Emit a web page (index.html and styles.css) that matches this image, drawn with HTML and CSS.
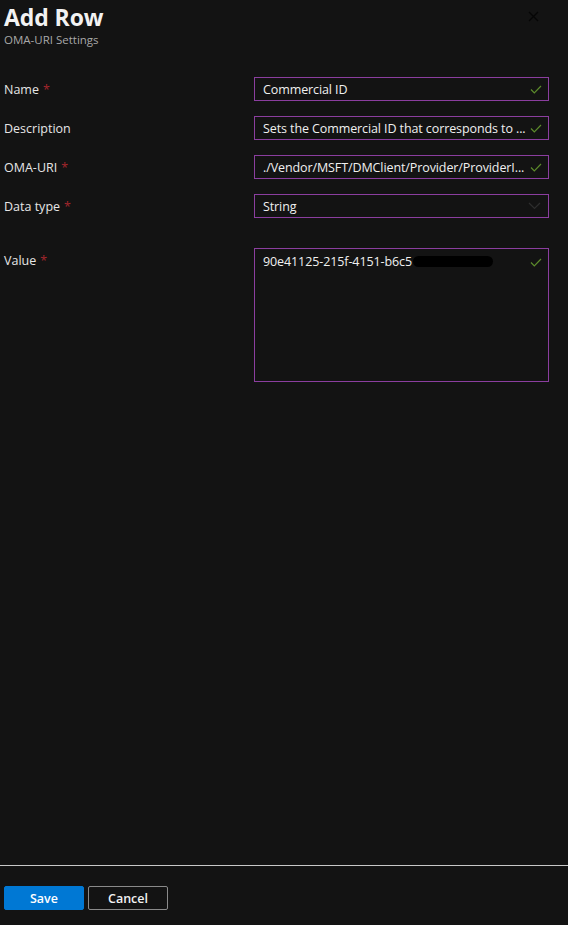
FILE: index.html
```html
<!DOCTYPE html>
<html>
<head>
<meta charset="utf-8">
<link rel="stylesheet" href="styles.css">
</head>
<body>
<div class="panel">
  <header class="head">
    <div class="titles">
      <h1 class="title">Add Row</h1>
      <div class="subtitle">OMA-URI Settings</div>
    </div>
    <button class="close" aria-label="Close">
      <svg width="11" height="11" viewBox="0 0 11 11"><path d="M1 1 L10 10 M10 1 L1 10" stroke="#050505" stroke-width="1.3" fill="none"/></svg>
    </button>
  </header>

  <main class="form">
    <div class="label">Name <span class="req">*</span></div>
    <div class="field"><span class="val">Commercial ID</span><svg class="chk" width="12" height="9" viewBox="0 0 12 9"><path d="M1 4.5 L4.3 7.8 L11 1" stroke="#5d8c2c" stroke-width="1.2" fill="none"/></svg></div>

    <div class="label">Description</div>
    <div class="field"><span class="val">Sets the Commercial ID that corresponds to ...</span><svg class="chk" width="12" height="9" viewBox="0 0 12 9"><path d="M1 4.5 L4.3 7.8 L11 1" stroke="#5d8c2c" stroke-width="1.2" fill="none"/></svg></div>

    <div class="label">OMA-URI <span class="req">*</span></div>
    <div class="field"><span class="val">./Vendor/MSFT/DMClient/Provider/ProviderI...</span><svg class="chk" width="12" height="9" viewBox="0 0 12 9"><path d="M1 4.5 L4.3 7.8 L11 1" stroke="#5d8c2c" stroke-width="1.2" fill="none"/></svg></div>

    <div class="label">Data type <span class="req">*</span></div>
    <div class="field"><span class="val">String</span><svg class="chev" width="13" height="8" viewBox="0 0 13 8"><path d="M1 1 L6.5 6.5 L12 1" stroke="#2e2e2e" stroke-width="1.2" fill="none"/></svg></div>

    <div class="label label-top">Value <span class="req">*</span></div>
    <div class="field area"><span class="val">90e41125-215f-4151-b6c5<span class="redact"></span></span><svg class="chk" width="12" height="9" viewBox="0 0 12 9"><path d="M1 4.5 L4.3 7.8 L11 1" stroke="#5d8c2c" stroke-width="1.2" fill="none"/></svg></div>
  </main>

  <footer class="foot">
    <button class="btn primary">Save</button>
    <button class="btn">Cancel</button>
  </footer>
</div>
</body>
</html>
```
FILE: styles.css
```css
* { box-sizing: border-box; }
html, body { margin: 0; padding: 0; background: #131313; }
body {
  font-family: "Open Sans", "Noto Sans", sans-serif;
  color: #e6e6e6;
  width: 568px;
  height: 925px;
  overflow: hidden;
}
.panel {
  height: 925px;
  display: flex;
  flex-direction: column;
}
.head {
  display: flex;
  justify-content: space-between;
  align-items: flex-start;
  padding: 3px 29px 0 4px;
}
.title {
  margin: 0;
  font-size: 23px;
  font-weight: 700;
  line-height: 28px;
  color: #f2f2f2;
  letter-spacing: -0.1px;
}
.subtitle {
  font-size: 11.5px;
  line-height: 16px;
  color: #a8a8a8;
  margin-top: 1px;
}
.close {
  background: none;
  border: none;
  padding: 0;
  margin-top: 8px;
  width: 11px;
  height: 11px;
  display: flex;
}
.form {
  display: grid;
  grid-template-columns: 250px 295px;
  row-gap: 15px;
  padding: 0 0 0 4px;
  margin-top: 29px;
  font-size: 12.5px;
}
.label {
  display: flex;
  align-items: center;
  height: 24px;
  color: #e6e6e6;
}
.label-top { margin-top: 15px; height: 24px; }
.req { color: #a4262c; margin-left: 4px; }
.field {
  height: 24px;
  border: 1px solid #8b3e9f;
  display: flex;
  align-items: center;
  gap: 2px;
  padding: 0 6px 0 8px;
  justify-content: space-between;
  color: #f0f0f0;
  background: #131313;
}
.val { white-space: nowrap; letter-spacing: -0.1px; }
.chk { flex: none; }
.chev { flex: none; margin-right: 1px; }
.area {
  height: 134px;
  margin-top: 15px;
  align-items: flex-start;
  padding-top: 4px;
}
.redact {
  display: inline-block;
  width: 80px;
  height: 11px;
  background: #000;
  border-radius: 6px;
  vertical-align: -1px;
  margin-left: 1px;
}
.area .chk { margin-top: 5px; }
.foot {
  margin-top: auto;
  border-top: 1px solid #c8c8c8;
  padding: 20px 4px 15px;
  display: flex;
  gap: 4px;
}
.btn {
  width: 80px;
  height: 24px;
  font-family: inherit;
  font-size: 12.5px;
  font-weight: 600;
  color: #f2f2f2;
  background: #131313;
  border: 1px solid #8a8a8a;
  border-radius: 2px;
  padding: 0;
}
.primary {
  background: #0078d4;
  border-color: #0078d4;
  color: #fff;
}
```
